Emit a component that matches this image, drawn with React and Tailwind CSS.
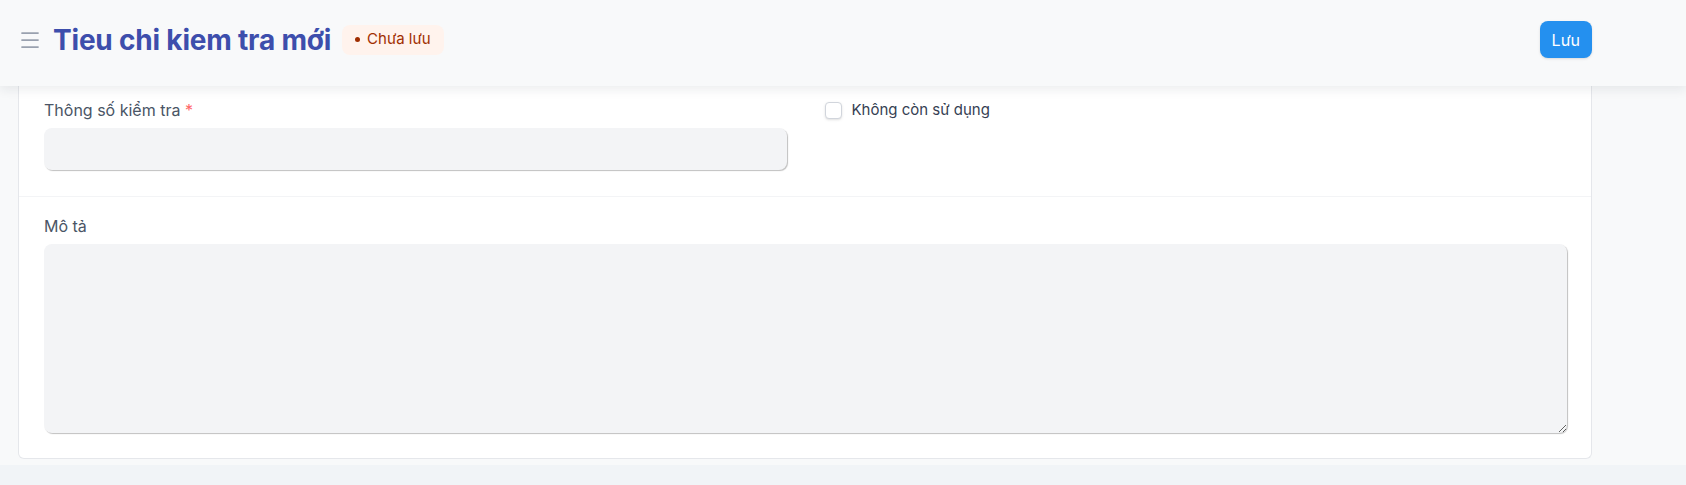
import { Menu } from "lucide-react";

export default function App() {
    return (
        <div className="min-h-screen bg-[#f1f4f7] font-['Inter',sans-serif]">
            <div className="bg-[#f8f9fa] pb-[6px]">
                {/* Header */}
                <header className="sticky top-0 z-10 h-[86px] bg-[#f8f9fa] shadow-[0_4px_10px_rgba(25,39,52,0.08)]">
                    <div className="flex h-full items-center pb-[7px] pl-[18px] pr-[94px]">
                        <button className="text-gray-400">
                            <Menu size={24} strokeWidth={1.75} />
                        </button>
                        <h1 className="ml-[11px] text-[28px] font-bold tracking-[-0.2px] text-[#3d4eac]">
                            Tieu chi kiem tra mới
                        </h1>
                        <span className="ml-[11px] flex h-[30px] items-center gap-[7px] rounded-lg bg-[#fff3ed] px-[13px] text-[15px] text-orange-800">
                            <span className="h-[5px] w-[5px] rounded-full bg-orange-800"></span>
                            Chưa lưu
                        </span>
                        <div className="flex-1" />
                        <button className="h-[37px] rounded-lg bg-[#2490ef] px-[12px] text-[16px] text-white shadow-sm">
                            Lưu
                        </button>
                    </div>
                </header>

                {/* Form card */}
                <div className="pl-[18px] pr-[94px]">
                    <div className="rounded-b-md border-x border-b border-gray-200 bg-white">
                        <div className="grid grid-cols-2 gap-x-[38px] border-b border-gray-100 pb-[26px] pl-[25px] pr-[24px] pt-[12px]">
                            <div>
                                <label className="block text-[16px] leading-6 text-gray-600">
                                    Thông số kiểm tra <span className="text-red-400">*</span>
                                </label>
                                <input
                                    type="text"
                                    className="mt-[6px] h-[42px] w-full rounded-lg bg-gray-100 px-3 shadow-[1px_1px_1px_rgba(0,0,0,0.25)] outline-none"
                                />
                            </div>
                            <div>
                                <label className="flex items-center gap-[10px] text-[15px] leading-6 text-gray-700">
                                    <input
                                        type="checkbox"
                                        className="h-[17px] w-[17px] appearance-none rounded border border-gray-300 bg-white shadow-sm"
                                    />
                                    Không còn sử dụng
                                </label>
                            </div>
                        </div>
                        <div className="pb-[25px] pl-[25px] pr-[24px] pt-[17px]">
                            <label className="block text-[16px] leading-6 text-gray-600">Mô tả</label>
                            <textarea className="mt-[6px] block h-[189px] w-full rounded-lg bg-gray-100 px-3 py-2 shadow-[1px_1px_1px_rgba(0,0,0,0.25)] outline-none" />
                        </div>
                    </div>
                </div>
            </div>
        </div>
    );
}
